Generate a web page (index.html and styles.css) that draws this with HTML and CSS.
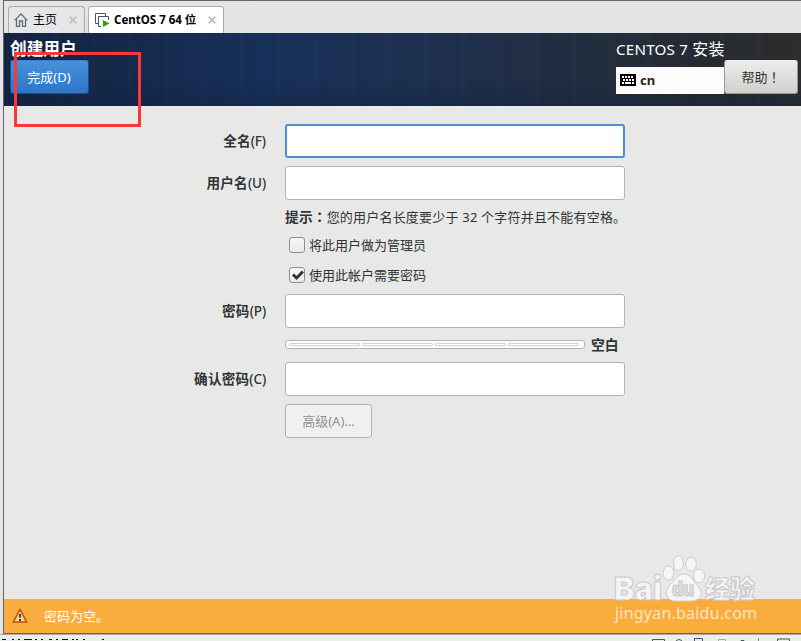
FILE: index.html
```html
<!DOCTYPE html>
<html lang="zh-CN">
<head>
<meta charset="utf-8">
<title>创建用户</title>
<link rel="stylesheet" href="styles.css">
</head>
<body>
<div class="window">
  <nav class="tabs">
    <div class="tab home">
      <svg width="14" height="14" viewBox="0 0 14 14" fill="none" stroke="#5d7080" stroke-width="1.3"><path d="M.6 7.4 7 1l6.400 6.400M2.500 6v7.300h3V8h3v5.300h3V6"/></svg>
      <span class="tab-name">主页</span>
      <svg class="close" width="8" height="8" viewBox="0 0 8 8"><path d="m.7.7 6.600 6.600m0-6.600L.7 7.300"/></svg>
    </div>
    <div class="tab active">
      <svg width="15" height="15" viewBox="0 0 15 15"><path d="M3 10.500H.5V.5h10V3M6 13.500H3.500v-10h10V7" fill="none" stroke="#42566b"/><path d="m8 7 6.500 3.500L8 14z" fill="#3f9b0b"/></svg>
      <span class="tab-name">CentOS 7 64 位</span>
      <svg class="close" width="8" height="8" viewBox="0 0 8 8"><path d="m.7.7 6.600 6.600m0-6.600L.7 7.300"/></svg>
    </div>
  </nav>
  <header class="header">
    <div class="title-side">
      <h1>创建用户</h1>
      <button class="done">完成(D)</button>
    </div>
    <div class="help-side">
      <div class="product">CENTOS 7 <span>安装</span></div>
      <div class="tools">
        <div class="layout">
          <svg width="16" height="12" viewBox="0 0 16 12"><path d="M0 0h16v12H0z"/><path d="M2 3h12" stroke="#fff" stroke-width="2" stroke-dasharray="2 1"/><path d="M3 6h11" stroke="#fff" stroke-width="2" stroke-dasharray="2 1"/><path d="M2 9h2m1 0h6m1 0h2" stroke="#fff" stroke-width="2"/></svg>
          <b>cn</b>
        </div>
        <button class="help">帮助<span class="centered" lang="zh-TW">！</span></button>
      </div>
    </div>
  </header>
  <main class="form">
    <label class="caption">全名<span>(F)</span></label><input class="field focused">
    <label class="caption">用户名<span>(U)</span></label><input class="field">
    <div class="hint"><b>提示<span class="centered" lang="zh-TW">：</span></b>您的用户名长度要少于 32 个字符并且不能有空格。</div>
    <div class="check"><span class="box"></span>将此用户做为管理员</div>
    <div class="check"><span class="box"><svg width="14" height="14" viewBox="0 0 14 14"><path d="m3 6.500 3.500 3.500L13 3.500" fill="none" stroke="#2e3436" stroke-width="3"/></svg></span>使用此帐户需要密码</div>
    <label class="caption">密码<span>(P)</span></label><input class="field">
    <div class="strength"><div class="meter"><i></i><i></i><i></i><i></i></div><b>空白</b></div>
    <label class="caption">确认密码<span>(C)</span></label><input class="field">
    <button class="advanced" disabled>高级(A)...</button>
  </main>
  <footer class="warning">
    <svg width="16" height="16" viewBox="0 0 16 16"><path d="M8 1.200 15 14.300H1z" fill="#f08b3c" stroke="#c85a10" stroke-width="1.500" stroke-linejoin="round"/><path d="M8 3.500 12.800 13H3.200z" fill="#f8d7a2"/><path d="M7 6h2l-.3 4H7.300zM7 11h2v2H7z" fill="#333"/></svg>
    <span>密码为空。</span>
  </footer>
</div>
<div class="status">
  <svg width="106" height="2" viewBox="0 0 106 2" stroke="#111"><path d="M2 1.500h4M12 1.500h2M18 1.500h2M24 1.500h8M35 1.500h2M41 1.500h2M49 1.500h3M56 1.500h2M62 1.500h6M72 1.500h2M76 1.500h2M83 1.500h2M102 1.500h2"/></svg>
  <svg width="148" height="5" viewBox="0 0 148 5" fill="none" stroke="#42566b"><path d="M.5 5V1.500h12V5M22 5q5-7 10 0M42.500 5V.5h8V5M125.500 5V1h12v4"/><path d="M66.500 5V1.500h7V5" stroke="#aaa"/><path d="M89 5V2.500h3V5"/><path d="M106.500 0v5" stroke="#888"/></svg>
</div>
<div class="frame"></div>
<svg class="watermark" width="150" height="72" viewBox="0 0 150 72">
  <g class="paw"><ellipse cx="54.500" cy="23" rx="5.500" ry="7.200"/><ellipse cx="64.500" cy="13" rx="5" ry="7.500"/><ellipse cx="77" cy="14" rx="5.300" ry="7"/><ellipse cx="85" cy="26" rx="5.500" ry="7"/><path d="M70 24c7 0 9 7 14 12 7 8 1 15-6 15H61c-8 0-12-9-5-16 5-5 7-11 14-11z"/></g>
  <g class="brand"><text x="0" y="50" textLength="48" lengthAdjust="spacingAndGlyphs">Bai</text><text class="du" x="58" y="46" textLength="22" lengthAdjust="spacingAndGlyphs">du</text><text class="cjk" x="91" y="47.500">经验</text></g>
  <text class="url" x="1" y="69" textLength="142">jingyan.baidu.com</text>
</svg>
</body>
</html>
```
FILE: styles.css
```css
* { box-sizing: border-box; }
body {
  position: relative;
  width: 801px;
  height: 641px;
  margin: 0;
  overflow: hidden;
  background: #e4e4e6;
  color: #2e3436;
  font: 13px/18px "Noto Sans", "Noto Sans CJK SC", sans-serif;
}
svg { display: block; flex: none; }
button, input { font: inherit; }
.centered { font-family: "Noto Sans CJK TC", sans-serif; line-height: 1; }
.window {
  display: flex;
  flex-direction: column;
  height: 634px;
  margin-left: 3px;
  border: solid #66666a;
  border-width: 1px 0 1px 1px;
}
.tabs {
  display: flex;
  align-items: flex-end;
  gap: 3px;
  height: 32px;
  padding-left: 4px;
  background: linear-gradient(#e5e5e7, #e1e3e5);
}
.tab {
  display: flex;
  align-items: center;
  height: 27px;
  padding: 0 7px 0 5px;
  border: 1px solid #aaa;
  border-bottom: 0;
  border-radius: 4px 4px 0 0;
  background: #e6e6e8;
  color: #000;
  font-size: 12px;
}
.home { width: 77px; }
.active { width: 136px; padding-left: 6px; background: #fff; }
.home .tab-name { margin-left: 5px; }
.active .tab-name { margin-left: 4px; font-weight: bold; font-size: 11.5px; white-space: nowrap; }
.close { margin-left: auto; stroke: #c4c4c4; stroke-width: 2; }
.header {
  display: flex;
  justify-content: space-between;
  height: 73px;
  padding: 6px 3px 0 6px;
  background:
    linear-gradient(transparent 60%, #10203d66),
    linear-gradient(90deg, transparent 50%, #262c3400 50%),
    repeating-linear-gradient(90deg, #ffffff00 0 11px, #ffffff03 14px 16px, #00000004 20px 27px, #ffffff00 37px),
    linear-gradient(90deg, #142341, #15294b 16%, #17305a 32%, #1d3050 52%, #212e42 70%, #262c34 85%, #2c2c2c);
  color: #fff;
}
h1 { margin: 0; font-size: 16.700px; line-height: 20px; height: 21px; }
.done {
  display: block;
  width: 79px;
  height: 34px;
  padding: 0 1px 0 0;
  border: 1px solid #1c5187;
  border-top-color: #3c7fc8;
  border-radius: 3px;
  background: linear-gradient(#4a90d9, #2a76c8);
  color: #fff;
}
.help-side { width: 182px; }
.product { font-size: 15.200px; letter-spacing: .2px; line-height: 21px; }
.product span { font-size: 16px; line-height: 1; }
.tools { display: flex; }
.layout {
  display: flex;
  align-items: center;
  gap: 4px;
  width: 108px;
  height: 27px;
  margin-top: 7px;
  padding: 0 0 1px 4px;
  background: #fcfcfc;
  color: #222;
}
.help {
  width: 74px;
  height: 34px;
  padding: 0;
  border: 1px solid #999994;
  border-top-color: #eee;
  border-radius: 3px;
  background: linear-gradient(#ececea, #d0d0cd);
  color: #2e3436;
}
.form {
  display: grid;
  grid-template-columns: 262px 340px;
  grid-template-rows: 34px 34px 18px 22px 22px 34px 18px 34px 34px;
  row-gap: 8px;
  column-gap: 19px;
  align-content: start;
  flex: 1;
  padding-top: 18px;
  background: #e8e8e6;
}
.caption {
  align-self: center;
  padding-bottom: 1px;
  font-weight: bold;
  font-size: 13.600px;
  letter-spacing: .2px;
  text-align: right;
}
.caption span { font-size: 13.500px; font-weight: 500; letter-spacing: -.1px; }
.field {
  width: 340px;
  height: 34px;
  border: 1px solid #b3b3b0;
  border-radius: 3px;
  background: #fff;
}
.focused { border: 2px solid #4a90d9; }
.hint, .check, .strength, .advanced { grid-column: 2; }
.hint { white-space: nowrap; letter-spacing: .2px; }
.hint b { font-size: 13.700px; }
.check { display: flex; align-items: center; gap: 4px; padding-left: 4px; }
.box {
  width: 16px;
  height: 16px;
  border: 1px solid #8f8f8c;
  border-radius: 3px;
  background: linear-gradient(#f8f8f8, #e8e8e6);
}
.strength { display: flex; align-items: center; gap: 6px; height: 18px; }
.strength b { padding-bottom: 1px; font-size: 13.800px; }
.meter {
  display: flex;
  gap: 2px;
  width: 300px;
  height: 9px;
  margin-bottom: 1px;
  padding: 2px 5px 2px 3px;
  border: 1px solid #b3b3b0;
  border-radius: 3px;
  background: #fff;
}
.meter i { flex: 1; height: 3px; border: 1px solid #d2d2d0; border-radius: 1px; }
.advanced {
  width: 87px;
  height: 34px;
  padding: 0;
  border: 1px solid #b3b3b0;
  border-radius: 3px;
  background: #f0f0ef;
  color: #8e9192;
}
.warning {
  display: flex;
  align-items: center;
  gap: 16px;
  height: 34px;
  padding-left: 8px;
  background: #faac3d;
  color: #fff;
}
.status {
  display: flex;
  justify-content: space-between;
  height: 7px;
  padding-top: 3px;
  border-top: 1px solid #aaa;
  background: #f0eeec;
}
.status svg { margin-right: 1px; }
.frame {
  position: absolute;
  left: 14px;
  top: 52px;
  width: 127px;
  height: 75px;
  border: 3px solid #fc3737;
}
.watermark { position: absolute; left: 614px; top: 550px; overflow: visible; }
.paw { fill: #f5f5f5; stroke: #ccc; stroke-width: 1px; }
.brand { fill: #f5f5f5; stroke: #c9c9c9; stroke-width: 1px; font: 900 32px/1 Inter, "Open Sans", sans-serif; }
.brand .du { font-size: 20px; fill: #ddd; }
.brand .cjk { font: 900 25px/1 "Noto Sans CJK SC", sans-serif; }
.url { fill: #fbe6c6; font: 16px/1 "Noto Sans", sans-serif; }
```
